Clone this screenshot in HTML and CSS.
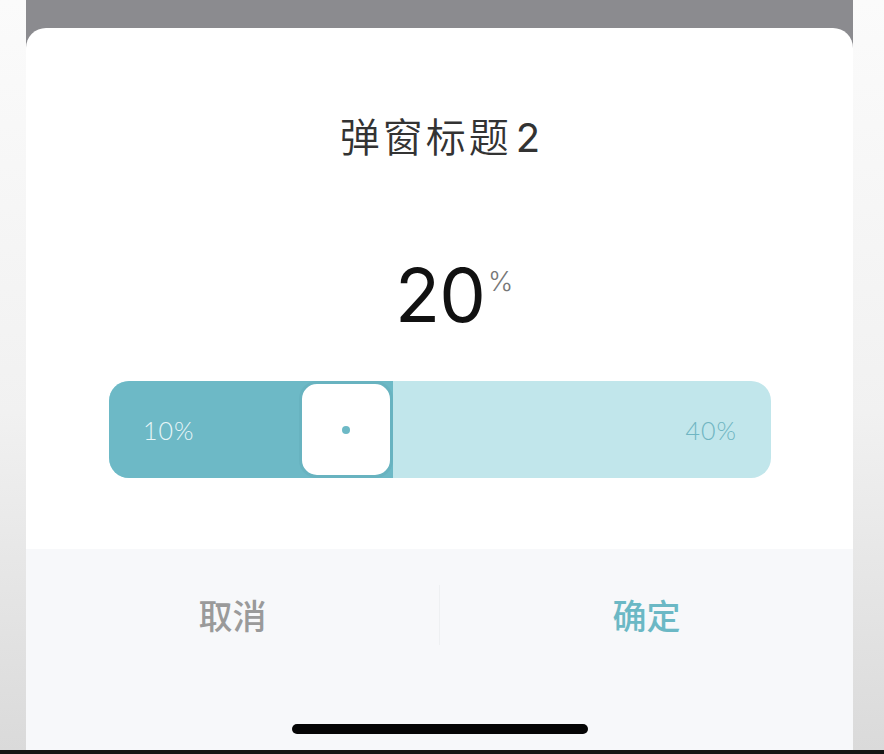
FILE: index.html
```html
<!DOCTYPE html>
<html lang="zh-CN">
<head>
<meta charset="utf-8">
<title>弹窗标题2</title>
<link rel="stylesheet" href="styles.css">
</head>
<body>
<div class="screen">
  <div class="stage">
    <div class="side side-left"></div>
    <div class="main">
      <div class="dim"></div>
      <div class="sheet">
        <div class="sheet-body">
          <h1 class="title">弹窗标题<span class="title-num">2</span></h1>
          <div class="value"><span class="num">20<span class="unit">%</span></span></div>
          <div class="slider">
            <div class="fill" style="width:284px"></div>
            <div class="thumb" style="left:190px"><span class="dot"></span></div>
            <div class="labels">
              <span class="label-min">10%</span>
              <span class="label-max">40%</span>
            </div>
          </div>
        </div>
        <div class="sheet-footer">
          <div class="actions">
            <button class="btn btn-cancel">取消</button>
            <button class="btn btn-ok">确定</button>
          </div>
          <div class="home-indicator"></div>
        </div>
      </div>
    </div>
    <div class="side side-right"></div>
  </div>
  <div class="bottom-bar"></div>
</div>
</body>
</html>
```

FILE: styles.css
```css
* { box-sizing: border-box; }
html, body {
  margin: 0;
  padding: 0;
  width: 884px;
  height: 754px;
  overflow: hidden;
  background: #f3f3f3;
  font-family: "Noto Sans CJK SC", "Noto Sans", sans-serif;
}
.screen {
  width: 884px;
  height: 754px;
  display: flex;
  flex-direction: column;
}
.stage {
  flex: 1;
  display: flex;
  min-height: 0;
}
.side {
  background: linear-gradient(to bottom, #fbfbfb 0%, #f1f1f1 55%, #dadada 100%);
}
.side-left { width: 26px; }
.side-right { width: 31px; }
.main {
  width: 827px;
  display: flex;
  flex-direction: column;
  background: #8b8b8f;
}
.dim { height: 28px; }
.sheet {
  flex: 1;
  display: flex;
  flex-direction: column;
  background: #ffffff;
  border-radius: 20px 20px 0 0;
  overflow: hidden;
}
.sheet-body {
  height: 521px;
  padding: 87px 82px 0 83px;
  display: flex;
  flex-direction: column;
  align-items: stretch;
}
.title {
  margin: 0;
  height: 40px;
  display: flex;
  justify-content: center;
  align-items: baseline;
  font-size: 40px;
  line-height: 40px;
  font-weight: 350;
  color: #333333;
  letter-spacing: 3px;
}
.title-num {
  font-family: Inter, "Liberation Sans", sans-serif;
  font-weight: 400;
  margin-left: 4px;
  letter-spacing: 0;
}
.value {
  margin-top: 100px;
  height: 80px;
  display: flex;
  justify-content: center;
}
.num {
  position: relative;
  font-family: Inter, "Liberation Sans", sans-serif;
  font-size: 74px;
  line-height: 80px;
  font-weight: 400;
  color: #111111;
  letter-spacing: -1px;
}
.unit {
  position: absolute;
  left: 100%;
  top: 12px;
  margin-left: 3px;
  font-size: 27px;
  line-height: 30px;
  font-weight: 300;
  color: #777777;
  letter-spacing: 0;
}
.slider {
  position: relative;
  margin-top: 46px;
  height: 97px;
  border-radius: 20px;
  background: #c1e6eb;
}
.fill {
  position: absolute;
  left: 0;
  top: 0;
  bottom: 0;
  background: #6db9c6;
  border-radius: 20px 0 0 20px;
}
.thumb {
  position: absolute;
  top: 0;
  width: 94px;
  height: 97px;
  background: #ffffff;
  border: 3px solid #68b3c0;
  border-radius: 18px;
  display: flex;
  align-items: center;
  justify-content: center;
  z-index: 2;
}
.dot {
  width: 8px;
  height: 8px;
  border-radius: 50%;
  background: #6db9c6;
}
.labels {
  position: relative;
  z-index: 1;
  height: 100%;
  display: flex;
  align-items: center;
  justify-content: space-between;
  padding: 0 34px 0 34px;
  font-family: Lato, "Open Sans", sans-serif;
  font-size: 25px;
  font-weight: 300;
  letter-spacing: 1px;
}
.label-min { color: #e8f6f8; }
.label-max { color: #6fb5c2; }
.sheet-footer {
  flex: 1;
  background: #f7f8fa;
  display: flex;
  flex-direction: column;
  align-items: center;
}
.actions {
  width: 100%;
  margin-top: 36px;
  height: 60px;
  display: flex;
}
.btn {
  flex: 1;
  border: 0;
  background: transparent;
  padding: 0;
  font-family: "Noto Sans CJK SC", sans-serif;
  font-size: 34px;
  font-weight: 500;
  line-height: 60px;
}
.btn-cancel { color: #9a9a9a; }
.btn-ok {
  color: #6bb8c5;
  border-left: 1px solid #eef0f2;
}
.home-indicator {
  margin-top: 79px;
  width: 296px;
  height: 10px;
  border-radius: 5px;
  background: #050505;
}
.bottom-bar {
  height: 4px;
  background: #141414;
}
```
